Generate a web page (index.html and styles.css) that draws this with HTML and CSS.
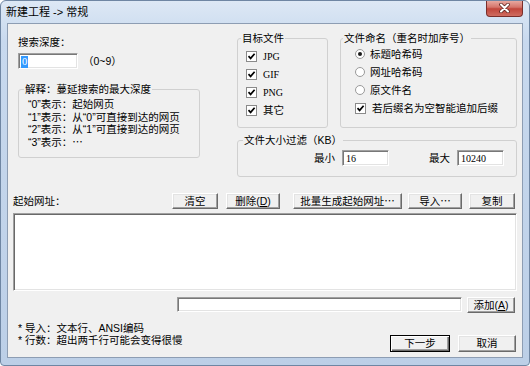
FILE: index.html
```html
<!DOCTYPE html>
<html lang="zh-CN">
<head>
    <meta charset="UTF-8">
    <title>新建工程 -> 常规</title>
    <link rel="stylesheet" href="styles.css">
</head>
<body>
    <div class="window">
        <div class="titlebar">
            <span class="title">新建工程 -&gt; 常规</span>
            <div class="close">
                <svg width="13" height="10" viewBox="0 0 13 10">
                    <path d="M3 1.5 L10 8.5 M10 1.5 L3 8.5" stroke="#5b2520" stroke-width="3.6" stroke-linecap="round"/>
                    <path d="M3 1.5 L10 8.5 M10 1.5 L3 8.5" stroke="#fff" stroke-width="2.1" stroke-linecap="round"/>
                </svg>
            </div>
        </div>
        <div class="client">
            <div class="top">
                <div class="depth">
                    <div class="depth-label">搜索深度：</div>
                    <div class="depth-row">
                        <div class="edit depth-edit"><span class="sel">0</span></div>
                        <span class="hint">（0~9）</span>
                    </div>
                    <fieldset class="group note-group">
                        <legend>解释：蔓延搜索的最大深度</legend>
                        <p>“0”表示：起始网页</p>
                        <p>“1”表示：从“0”可直接到达的网页</p>
                        <p>“2”表示：从“1”可直接到达的网页</p>
                        <p>“3”表示：⋯</p>
                    </fieldset>
                </div>
                <div class="options">
                    <div class="options-row">
                        <fieldset class="group types">
                            <legend>目标文件</legend>
                            <div class="opt"><span class="check"></span><span class="ext">JPG</span></div>
                            <div class="opt"><span class="check"></span><span class="ext">GIF</span></div>
                            <div class="opt"><span class="check"></span><span class="ext">PNG</span></div>
                            <div class="opt"><span class="check"></span><span>其它</span></div>
                        </fieldset>
                        <fieldset class="group naming">
                            <legend>文件命名（重名时加序号）</legend>
                            <div class="opt"><span class="radio on"></span><span>标题哈希码</span></div>
                            <div class="opt"><span class="radio"></span><span>网址哈希码</span></div>
                            <div class="opt"><span class="radio"></span><span>原文件名</span></div>
                            <div class="opt"><span class="check"></span><span>若后缀名为空智能追加后缀</span></div>
                        </fieldset>
                    </div>
                    <fieldset class="group size">
                        <legend>文件大小过滤（KB）</legend>
                        <div class="size-row">
                            <span>最小</span>
                            <div class="edit size-edit">16</div>
                            <span class="max-label">最大</span>
                            <div class="edit size-edit">10240</div>
                        </div>
                    </fieldset>
                </div>
            </div>

            <div class="url-bar">
                <span class="url-label">起始网址：</span>
                <button class="btn w46">清空</button>
                <button class="btn w54 gap8">删除(<u>D</u>)</button>
                <button class="btn w109 gap13">批量生成起始网址⋯</button>
                <button class="btn w54 gap6">导入⋯</button>
                <button class="btn w46 gap7">复制</button>
            </div>
            <div class="url-list"></div>

            <div class="add-row">
                <div class="edit add-edit"></div>
                <button class="btn w48">添加(<u>A</u>)</button>
            </div>

            <div class="footer">
                <div class="notes">
                    <p>* 导入：文本行、ANSI编码</p>
                    <p>* 行数：超出两千行可能会变得很慢</p>
                </div>
                <div class="actions">
                    <button class="btn default w60">下一步</button>
                    <button class="btn w58">取消</button>
                </div>
            </div>
        </div>
    </div>
</body>
</html>
```

FILE: styles.css
```css
* {
    box-sizing: border-box;
}
body {
    margin: 0;
    background: #fff;
    font-family: "Liberation Sans", "Noto Sans CJK SC", sans-serif;
    font-size: 10.5px;
    line-height: 13px;
    color: #000;
}
p {
    margin: 0;
}
.window {
    width: 530px;
    height: 366px;
    border: 1px solid #6f86a3;
    border-radius: 6px 6px 4px 4px;
    background: linear-gradient(#dde8f5, #c8d9ee 40px, #bccfe7);
    display: flex;
    flex-direction: column;
    overflow: hidden;
}
.titlebar {
    height: 22px;
    flex: none;
    display: flex;
    align-items: center;
    justify-content: space-between;
    padding-left: 5px;
}
.title {
    font-size: 11px;
}
.close {
    align-self: flex-start;
    margin-top: -1px;
    margin-right: 6px;
    width: 37px;
    height: 17px;
    border: 1px solid #7a2e2a;
    border-top: none;
    border-radius: 0 0 4px 4px;
    background: linear-gradient(#eab0a7, #d5756b 45%, #c1463b 55%, #cf6c60);
    display: flex;
    align-items: center;
    justify-content: center;
}
.client {
    margin: 0 6px;
    height: 335px;
    border: 1px solid #8d9db3;
    background: #f0f0f0;
    padding: 8px 5px 0 5px;
    display: flex;
    flex-direction: column;
}

/* top part */
.top {
    display: flex;
    gap: 37px;
    padding-left: 5px;
}
.depth {
    width: 182px;
    display: flex;
    flex-direction: column;
}
.depth-label {
    margin-top: 4px;
}
.depth-row {
    margin-top: 4px;
    display: flex;
    align-items: center;
}
.edit {
    height: 16px;
    background: #fff;
    border: 1px solid;
    border-color: #a0a0a0 #fff #fff #a0a0a0;
    box-shadow: inset 1px 1px #787878, inset -1px -1px #e3e3e3;
    padding: 1px 3px;
    font-family: "Liberation Serif", serif;
    font-size: 10.5px;
    line-height: 13px;
}
.depth-edit {
    width: 60px;
    padding-left: 2px;
}
.sel {
    display: inline-block;
    background: #3399ff;
    color: #fff;
    padding: 0 1px;
    line-height: 12px;
}
.hint {
    margin-left: 5px;
}
.group {
    margin: 0;
    padding: 0 5px;
    border: 1px solid #d0d0d0;
    border-radius: 3px;
    min-width: 0;
}
.group legend {
    padding: 0 1px;
    line-height: 13px;
}
.note-group {
    margin-top: 14px;
    height: 75px;
}
.note-group p {
    margin-left: 4px;
    line-height: 12.5px;
}
.note-group p:first-of-type {
    margin-top: 2px;
}
.options {
    width: 280px;
    display: flex;
    flex-direction: column;
    gap: 6px;
}
.options-row {
    display: flex;
    justify-content: space-between;
}
.types {
    width: 91px;
    height: 96px;
    padding: 0 3px;
}
.naming {
    width: 177px;
    height: 96px;
    padding: 0 2px;
}
.opt {
    height: 18px;
    display: flex;
    align-items: center;
    margin-left: 5px;
}
.types .opt:first-of-type {
    margin-top: 2px;
}
.naming .opt {
    margin-left: 12px;
}
.ext {
    font-family: "Liberation Serif", serif;
    font-size: 10px;
}
.check {
    width: 11px;
    height: 11px;
    margin-right: 6px;
    background: #fff;
    border: 1px solid #8a8a8a;
    background-image: url("data:image/svg+xml;utf8,<svg xmlns='http://www.w3.org/2000/svg' width='9' height='9' viewBox='0 0 9 9'><path d='M1.5 4.2 L3.6 6.4 L7.6 1.8' fill='none' stroke='%23000' stroke-width='1.7'/></svg>");
    background-repeat: no-repeat;
    background-position: center;
}
.radio {
    width: 10px;
    height: 10px;
    margin-right: 5px;
    border-radius: 50%;
    background: #fff;
    border: 1px solid #9a9a9a;
    display: flex;
    align-items: center;
    justify-content: center;
}
.radio.on::after {
    content: "";
    width: 4px;
    height: 4px;
    border-radius: 50%;
    background: #1a1a1a;
}
.size {
    height: 43px;
}
.size-row {
    margin-top: 3px;
    display: flex;
    align-items: center;
    justify-content: flex-end;
    padding-right: 7px;
}
.size-edit {
    width: 47px;
    margin-left: 7px;
    font-size: 10px;
}
.max-label {
    margin-left: 40px;
}

/* url list */
.url-bar {
    margin-top: 16px;
    height: 16px;
    display: flex;
    align-items: center;
    padding-right: 2px;
}
.url-label {
    width: 159px;
}
.btn {
    height: 16px;
    padding: 0;
    background: #f0f0f0;
    border: 1px solid;
    border-color: #fff #6a6a6a #6a6a6a #fff;
    box-shadow: inset -1px -1px #a0a0a0, inset 1px 1px #e3e3e3;
    font: inherit;
    line-height: 13px;
    color: #000;
}
.btn u {
    text-decoration: underline;
}
.w46 { width: 46px; }
.w48 { width: 48px; }
.w54 { width: 54px; }
.w58 { width: 58px; }
.w60 { width: 60px; }
.w109 { width: 109px; }
.gap6 { margin-left: 6px; }
.gap7 { margin-left: 7px; }
.gap8 { margin-left: 8px; }
.gap13 { margin-left: 13px; }
.url-list {
    margin-top: 4px;
    height: 78px;
    background: #fff;
    border: 1px solid;
    border-color: #a0a0a0 #fff #fff #a0a0a0;
    box-shadow: inset 1px 1px #696969, inset -1px -1px #e3e3e3;
}
.add-row {
    margin-top: 6px;
    display: flex;
    align-items: flex-start;
    justify-content: flex-end;
    gap: 5px;
    padding-right: 2px;
}
.add-edit {
    width: 285px;
    height: 15px;
}

/* footer */
.footer {
    margin-top: 9px;
    height: 30px;
    display: flex;
    justify-content: space-between;
    padding-left: 5px;
    padding-right: 1px;
}
.notes p {
    line-height: 12px;
}
.actions {
    align-self: flex-end;
    display: flex;
    gap: 8px;
}
.actions .btn {
    height: 17px;
}
.btn.default {
    border-color: #000;
    box-shadow: inset 1px 1px #fff, inset -1px -1px #6a6a6a, inset -2px -2px #a0a0a0;
}
```
